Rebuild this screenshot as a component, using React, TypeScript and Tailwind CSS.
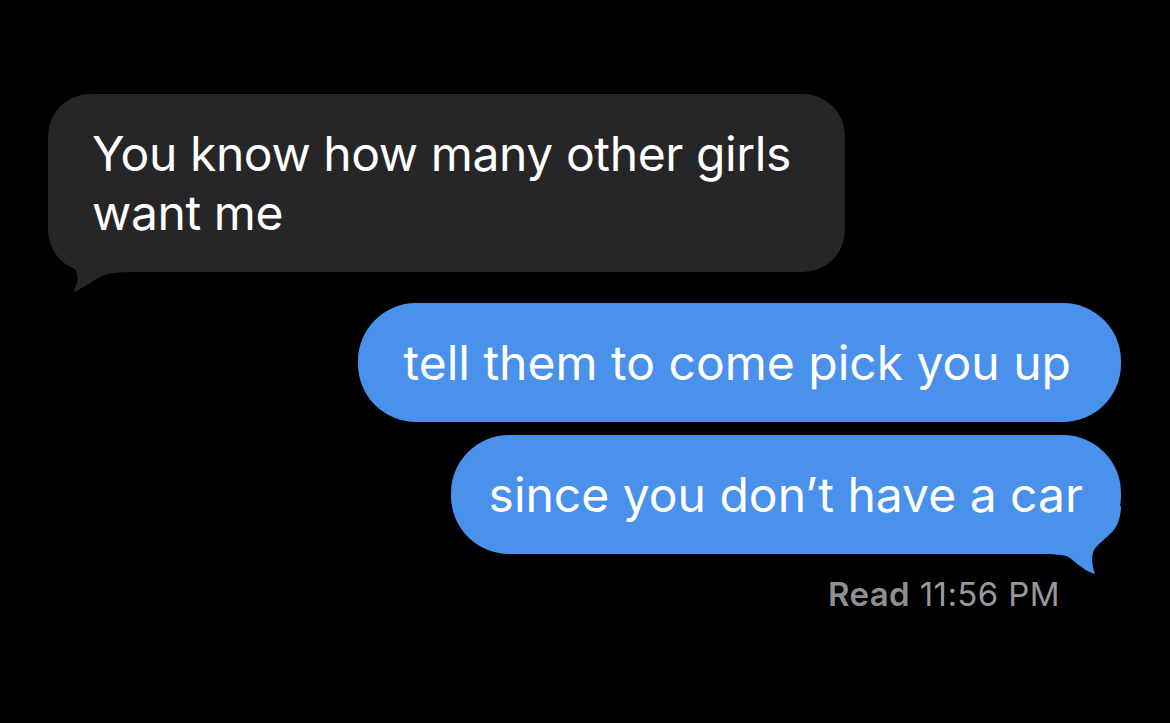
import React from "react";

const font = { fontFamily: '"Inter", "Liberation Sans", sans-serif' };

// iMessage tail, incoming side
function TailLeft() {
  return (
    <svg
      className="absolute left-0 bottom-[-22px]"
      width="90"
      height="70"
      viewBox="0 0 90 70"
    >
      <path
        d="M0 0 C0 14 4 25 12 31 C18 36 24 40 27 45 C31 52 30 60 25 68 C33 66 42 58 52 53 C58 50 66 48 90 48 L90 0 Z"
        fill="#262628"
      />
    </svg>
  );
}

// iMessage tail, outgoing side
function TailRight() {
  return (
    <svg
      className="absolute right-0 bottom-[-22px]"
      width="90"
      height="70"
      viewBox="0 0 90 70"
    >
      <path
        d="M90 0 C90 12 86 22 79 28 C74 33 67 38 63 44 C60 50 61 60 64 68 C56 66 46 58 39 52 C35 49 30 48 0 48 L0 0 Z"
        fill="#4a91ec"
      />
    </svg>
  );
}

export default function App() {
  return (
    <div
      className="w-[1170px] h-[723px] bg-black overflow-hidden flex flex-col pt-[94px] pl-[48px] pr-[49px]"
      style={font}
    >
      {/* incoming */}
      <div className="relative self-start max-w-[797px] bg-[#262628] rounded-[42px] pl-[44px] pr-[40px] py-[30px]">
        <TailLeft />
        <p className="relative text-[48px] leading-[59px] text-white tracking-[-0.4px]">
          You know how many other girls want me
        </p>
      </div>

      {/* outgoing */}
      <div className="flex flex-col items-end mt-[31px] gap-[13px]">
        <div className="bg-[#4a91ec] rounded-[58px] pl-[45px] pr-[50px] py-[30px]">
          <p className="text-[48px] leading-[59px] text-white">
            tell them to come pick you up
          </p>
        </div>
        <div className="relative bg-[#4a91ec] rounded-[58px] pl-[38px] pr-[38px] py-[30px]">
          <TailRight />
          <p className="relative text-[48px] leading-[59px] text-white">
            since you don’t have a car
          </p>
        </div>
      </div>

      <div className="self-end mr-[61px] mt-[21px] text-[33px] leading-[38px] tracking-[0.4px] text-[#98989d]">
        <span className="font-semibold text-[#8e8e93]">Read</span> 11:56 PM
      </div>
    </div>
  );
}
